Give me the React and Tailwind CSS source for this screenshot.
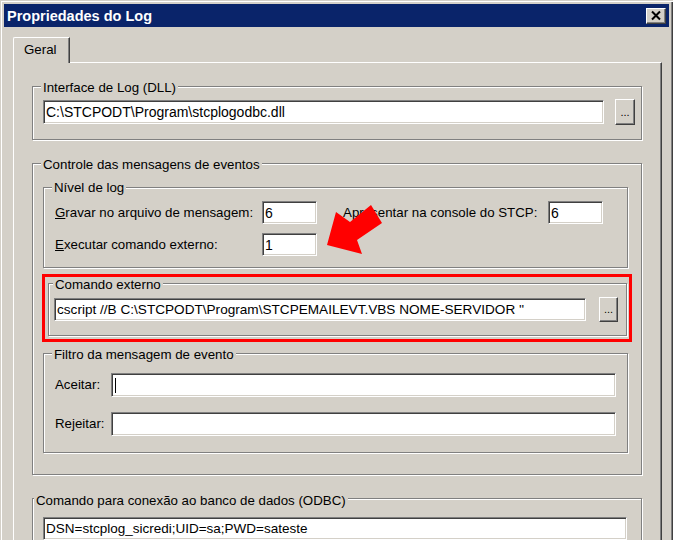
import React from "react";

function Group({ label, className = "", labelClass = "", children }) {
  return (
    <div className={`border border-[#808080] shadow-[inset_1px_1px_0_#ffffff,1px_1px_0_#ffffff] ${className}`}>
      <div className={`w-fit bg-[#d4d0c8] px-[2px] leading-[16px] whitespace-nowrap ${labelClass}`}>{label}</div>
      {children}
    </div>
  );
}

function Field({ className = "", children }) {
  return (
    <div className={`flex items-center bg-white border border-t-[#808080] border-l-[#808080] border-b-white border-r-white shadow-[inset_1px_1px_0_#404040,inset_-1px_-1px_0_#d4d0c8] pl-[2px] leading-[16px] whitespace-nowrap overflow-hidden ${className}`}>
      {children}
    </div>
  );
}

function Btn({ className = "" }) {
  return (
    <div className={`flex items-end justify-center pb-[6px] bg-[#d4d0c8] border border-t-white border-l-white border-b-[#404040] border-r-[#404040] shadow-[inset_-1px_-1px_0_#808080] text-[11px] leading-none ${className}`}>
      ...
    </div>
  );
}

export default function App() {
  return (
    <div className="relative w-[673px] h-[540px] overflow-hidden bg-[#d4d0c8] pt-[4px] pl-[4px] pr-[4px] font-['Liberation_Sans',Arial,sans-serif] text-[13.3px] text-black shadow-[inset_1px_1px_0_#d4d0c8,inset_2px_2px_0_#ffffff,inset_-1px_0_0_#404040,inset_-2px_0_0_#808080]">
      {/* Title bar */}
      <div className="h-[23px] bg-[#0a246a] flex items-center justify-between pl-[3px] pr-[3px]">
        <span className="text-white font-bold text-[14.5px] leading-[18px]">Propriedades do Log</span>
        <div className="w-[20px] h-[16px] bg-[#d4d0c8] border border-t-white border-l-white border-b-[#404040] border-r-[#404040] shadow-[inset_-1px_-1px_0_#808080] flex items-center justify-center">
          <svg width="18" height="14" viewBox="0 0 18 14">
            <path d="M5 2.5 L13 10.5 M13 2.5 L5 10.5" stroke="#000" strokeWidth="2" fill="none" />
          </svg>
        </div>
      </div>

      {/* Body */}
      <div className="pl-[9px] pr-[7px] pt-[10px]">
        <div className="flex">
          <div className="relative z-10 -mb-[1px] w-[57px] h-[26px] bg-[#d4d0c8] border-l border-t border-white border-r border-r-[#404040] shadow-[inset_-1px_0_0_#808080] rounded-tl-[2px] pl-[10px] pt-[4px] leading-[16px]">
            Geral
          </div>
        </div>

        <div className="h-[500px] border-t border-l border-white border-r border-r-[#404040] shadow-[inset_-1px_0_0_#808080]">
          {/* Interface de Log */}
          <Group label="Interface de Log (DLL)" className="mt-[23px] ml-[18px] w-[610px] pb-[14px]" labelClass="-mt-[7px] ml-[8px]">
            <div className="mt-[3px] h-[26px] flex items-center pl-[10px]">
              <Field className="w-[561px] h-[24px] text-[14px]">C:\STCPODT\Program\stcplogodbc.dll</Field>
              <Btn className="ml-[11px] w-[20px] h-[26px]" />
            </div>
          </Group>

          {/* Controle das mensagens */}
          <Group label="Controle das mensagens de eventos" className="mt-[23px] ml-[18px] w-[610px] pb-[21px]" labelClass="-mt-[7px] ml-[8px]">
            <Group label="Nível de log" className="mt-[14px] ml-[10px] w-[585px] pb-[11px]" labelClass="-mt-[8px] ml-[8px]">
              <div className="mt-[5px] h-[23px] flex items-center pl-[11px]">
                <span className="w-[207px]"><u>G</u>ravar no arquivo de mensagem:</span>
                <Field className="w-[55px] h-[23px] text-[14px]">6</Field>
                <span className="ml-[26px] w-[205px]">A<u>p</u>resentar na console do STCP:</span>
                <Field className="w-[55px] h-[23px] text-[14px]">6</Field>
              </div>
              <div className="mt-[9px] h-[23px] flex items-center pl-[11px]">
                <span className="w-[207px]"><u>E</u>xecutar comando externo:</span>
                <Field className="w-[55px] h-[23px] text-[14px]">1</Field>
              </div>
            </Group>

            <div className="mt-[6px] ml-[9px] w-[590px] border-[3px] border-[#ff0000] pb-[3px]">
              <Group label="Comando externo" className="mt-[6px] ml-[3px] w-[579px] pb-[13px]" labelClass="-mt-[7px] ml-[4px]">
                <div className="mt-[4px] h-[25px] flex items-center pl-[5px]">
                  <Field className="w-[532px] h-[23px] text-[13.6px]">cscript //B C:\STCPODT\Program\STCPEMAILEVT.VBS NOME-SERVIDOR ''</Field>
                  <Btn className="ml-[13px] w-[19px] h-[25px]" />
                </div>
              </Group>
            </div>

            <Group label="Filtro da mensagem de evento" className="mt-[11px] ml-[10px] w-[585px] pb-[16px]" labelClass="-mt-[7px] ml-[8px]">
              <div className="mt-[10px] h-[24px] flex items-center pl-[11px]">
                <span className="w-[56px]">Aceitar:</span>
                <Field className="w-[505px] h-[24px]">
                  <span className="ml-[1px] w-[1px] h-[15px] bg-black" />
                </Field>
              </div>
              <div className="mt-[15px] h-[24px] flex items-center pl-[11px]">
                <span className="w-[56px]">Rejeitar:</span>
                <Field className="w-[505px] h-[24px]" />
              </div>
            </Group>
          </Group>

          {/* ODBC */}
          <Group label="Comando para conexão ao banco de dados (ODBC)" className="mt-[23px] ml-[18px] w-[610px] pb-[20px]" labelClass="-mt-[6px] ml-[1px]">
            <Field className="mt-[8px] ml-[10px] w-[584px] h-[23px] text-[13.5px]">DSN=stcplog_sicredi;UID=sa;PWD=sateste</Field>
          </Group>
        </div>
      </div>

      {/* Red annotation arrow */}
      <svg className="absolute left-[320px] top-[200px]" width="70" height="60" viewBox="0 0 70 60">
        <polygon points="7,45 16,12 30,22 51,5 62,23 37,40 42,54" fill="#ff0000" />
      </svg>
    </div>
  );
}
